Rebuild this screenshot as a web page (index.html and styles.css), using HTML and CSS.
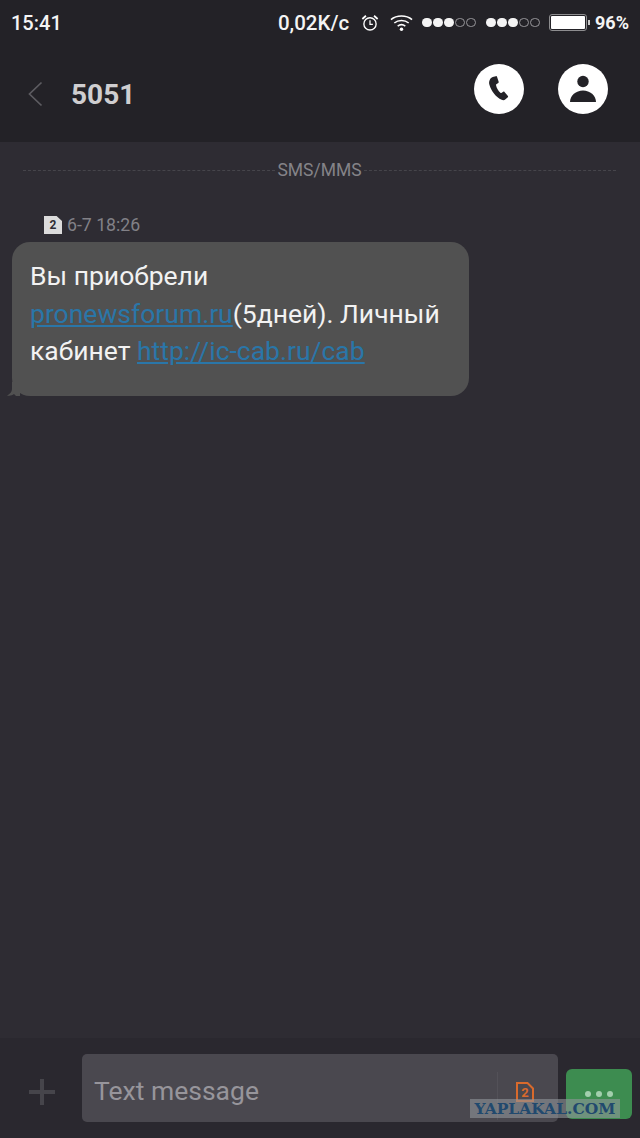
FILE: index.html
```html
<!DOCTYPE html>
<html lang="en">
<head>
  <meta charset="UTF-8" />
  <title>5051</title>
  <link rel="stylesheet" href="styles.css">
</head>
<body>

  <!-- Status bar + header -->
  <div class="top">
    <div class="status">
      <div class="time">15:41</div>
      <div class="status-right">
        <span class="speed">0,02K/c</span>
        <svg class="alarm" width="18" height="18" viewBox="0 0 20 20" fill="none" stroke="#fff">
          <circle cx="10" cy="11" r="6.8" stroke-width="1.5"/>
          <path d="M10 7v4.4h3.2" stroke-width="1.4"/>
          <path d="M1.500 5.500 5.500 2M18.500 5.500 14.500 2" stroke-width="2"/>
        </svg>
        <svg class="wifi" width="23" height="18" viewBox="0 0 24 18" fill="none" stroke="#fff" stroke-width="1.6">
          <path d="M1 5.500C7 .5 17 .5 23 5.500"/>
          <path d="M4.500 9C8.500 5.500 15.500 5.500 19.500 9"/>
          <path d="M8 12.300C10.500 10.300 13.500 10.300 16 12.300"/>
          <circle cx="12" cy="15.500" r="1.800" fill="#fff" stroke="none"/>
        </svg>
        <span class="dots sim1"><i></i><i></i><i></i><b></b><b></b></span>
        <span class="dots sim2"><i></i><i></i><i></i><b></b><b></b></span>
        <span class="battery"><span class="level"></span></span>
        <span class="percent">96%</span>
      </div>
    </div>

    <div class="header">
      <svg class="back" width="16" height="26" viewBox="0 0 16 26" fill="none" stroke="#5d5c61" stroke-width="1.700">
        <path d="M14.500 1.500 2.500 13l12 11.500"/>
      </svg>
      <div class="title">5051</div>
      <div class="round-btn btn-call">
        <svg width="22" height="25" viewBox="0 0 26 30">
          <path fill="#232227" d="M5.500 1.200 9.200.2c.7-.2 1.200.1 1.400.7l2 6c.2.6 0 1.100-.5 1.400L9.800 9.900c-.4.300-.5.600-.4 1 .6 3.400 2.700 7 5.300 9.300.3.300.7.300 1.100.1l2.300-1.400c.5-.3 1.100-.2 1.500.3l4.100 4.700c.4.500.4 1.100-.1 1.500l-2.800 2.600c-1.300 1.200-3 1.400-4.600.6C9.500 25.500 3.800 18.500 1.500 10.500 .9 8.300 1 6.500 2 4.500c.7-1.500 2-2.800 3.500-3.300z"/>
        </svg>
      </div>
      <div class="round-btn btn-contact">
        <svg width="28" height="28" viewBox="0 0 28 28" fill="#232227">
          <circle cx="14" cy="6.500" r="5.700"/>
          <path d="M1 27c0-6.500 6-11.500 13-11.500S27 20.500 27 27z"/>
        </svg>
      </div>
    </div>
  </div>

  <!-- Messages -->
  <div class="thread">
    <div class="divider">
      <span class="dash"></span>
      <span class="divider-text">SMS/MMS</span>
      <span class="dash"></span>
    </div>

    <div class="msg-meta">
      <span class="sim-badge">2</span>
      <span class="msg-date">6-7 18:26</span>
    </div>

    <div class="bubble">
      Вы приобрели<br>
      <a href="#">pronewsforum.ru</a>(5дней). Личный<br>
      кабинет <a href="#">http://ic-cab.ru/cab</a>
      <svg class="tail" width="13" height="14" viewBox="0 0 13 14">
        <path fill="#515151" d="M5 0v7c0 3-2 5-5 6.500 3 .5 5 0 7-1.500l2 2h4V0z"/>
      </svg>
    </div>
  </div>

  <!-- Compose bar -->
  <div class="compose">
    <svg class="plus" width="28" height="28" viewBox="0 0 28 28" fill="#46454b">
      <path d="M12 1h4v11h11v4H16v11h-4V16H1v-4h11z"/>
    </svg>
    <div class="input">
      <span class="placeholder">Text message</span>
      <span class="input-sep"></span>
      <span class="sim-out">
        <svg width="18" height="20" viewBox="0 0 18 20" fill="none" stroke="#d96a2c" stroke-width="2">
          <path d="M1 1h10.500L17 6.500V19H1z"/>
        </svg>
        <span class="sim-num">2</span>
      </span>
    </div>
    <div class="send">
      <i></i><i></i><i></i>
    </div>
    <div class="watermark">YAPLAKAL.COM</div>
  </div>

</body>
</html>
```

FILE: styles.css
```css
* {
  margin: 0;
  padding: 0;
  box-sizing: border-box;
}

body {
  font-family: Roboto, "Noto Sans", sans-serif;
  background-color: #2e2c33;
  display: flex;
  flex-direction: column;
  height: 100vh;
  overflow: hidden;
}

.top {
  background-color: #232227;
  height: 142px;
  flex-shrink: 0;
}

.status {
  display: flex;
  align-items: center;
  justify-content: space-between;
  height: 45px;
  padding: 0 11px 0 11px;
  color: #f4f4f4;
  font-weight: 500;
  font-size: 20px;
}

.status-right {
  display: flex;
  align-items: center;
}

.speed { margin-right: 12px; font-size: 20.500px; }
.alarm { margin-right: 11px; }
.wifi { margin-right: 9px; }

.dots {
  display: flex;
  align-items: center;
  gap: 1.500px;
}

.sim1 { margin-right: 10px; }
.sim2 { margin-right: 9px; }

.dots i, .dots b {
  width: 9.600px;
  height: 9.600px;
  border-radius: 50%;
}

.dots i { background-color: #f4f4f4; }
.dots b { border: 1px solid #97969a; }

.battery {
  width: 38px;
  height: 17px;
  border: 1px solid #8d8d8f;
  border-radius: 3px;
  padding: 1px;
  margin-right: 8px;
  position: relative;
}

.battery::after {
  content: "";
  position: absolute;
  right: -4px;
  top: 5px;
  width: 2px;
  height: 5px;
  background-color: #c9c9c9;
}

.level {
  display: block;
  height: 100%;
  background-color: #fff;
  border-radius: 1px;
}

.percent { font-size: 18px; font-weight: 700; }

.header {
  display: flex;
  align-items: center;
  height: 97px;
  padding: 0 32px 10px 27px;
}

.back { margin-right: 28px; margin-top: 10px; }

.title {
  font-size: 28px;
  font-weight: 700;
  color: #cfced0;
  flex: 1;
  margin-top: 11px;
}

.round-btn {
  width: 50px;
  height: 50px;
  border-radius: 50%;
  background-color: #fff;
  display: flex;
  align-items: center;
  justify-content: center;
}

.btn-call { margin-right: 34px; }

.thread {
  flex: 1;
  padding: 0 12px;
}

.divider {
  display: flex;
  align-items: center;
  gap: 2px;
  height: 56px;
  padding: 0 12px 0 11px;
}

.dash {
  flex: 1;
  border-top: 1px dashed #46454b;
}

.divider-text {
  color: #848388;
  font-size: 17.500px;
}

.msg-meta {
  display: flex;
  align-items: center;
  gap: 5px;
  height: 28px;
  padding: 0 0 0 32px;
  margin-top: 13px;
  margin-bottom: 3px;
}

.sim-badge {
  width: 18px;
  height: 18px;
  background-color: #dcdcdc;
  color: #2e2c33;
  font-size: 12px;
  font-weight: 700;
  clip-path: polygon(0 0, 70% 0, 100% 28%, 100% 100%, 0 100%);
  display: flex;
  align-items: center;
  justify-content: center;
}

.msg-date {
  color: #828187;
  font-size: 17.700px;
}

.bubble {
  position: relative;
  width: 457px;
  height: 154px;
  background-color: #515151;
  border-radius: 18px;
  padding: 15px 18px 0;
  font-size: 26.500px;
  line-height: 37.500px;
  color: #f2f2f2;
  white-space: nowrap;
}

.bubble a {
  color: #2a76a8;
  text-decoration: underline;
  text-underline-offset: 2px;
}

.tail {
  position: absolute;
  left: -5px;
  bottom: 0;
}

.compose {
  position: relative;
  flex-shrink: 0;
  height: 100px;
  background-color: #2a282f;
  display: flex;
  align-items: flex-start;
  padding: 16px 8px 0 28px;
}

.plus { margin-top: 24px; margin-right: 26px; }

.input {
  position: relative;
  width: 476px;
  height: 68px;
  background-color: #4a484f;
  border-radius: 5px;
  display: flex;
  align-items: center;
  padding: 4px 0 0 12px;
  margin-right: 8px;
}

.placeholder {
  flex: 1;
  color: #97959b;
  font-size: 26.500px;
}

.input-sep {
  width: 1px;
  height: 48px;
  margin-top: 12px;
  background-color: #535158;
}

.sim-out {
  position: relative;
  width: 18px;
  height: 20px;
  margin: 4px 24px 0 18px;
}

.sim-out svg { display: block; }

.sim-num {
  position: absolute;
  left: 0;
  right: 0;
  top: 3px;
  color: #d96a2c;
  font-size: 13px;
  font-weight: 700;
  line-height: 16px;
  text-align: center;
}

.send {
  width: 66px;
  height: 50px;
  margin-top: 15px;
  background-color: #3d8c50;
  border-radius: 6px;
  display: flex;
  align-items: center;
  justify-content: center;
  gap: 5px;
}

.send i {
  width: 6px;
  height: 6px;
  border-radius: 50%;
  background-color: #a3cfae;
}

/* image host stamp, sits over the bar */
.watermark {
  position: absolute;
  left: 470px;
  top: 61px;
  width: 150px;
  height: 19px;
  background-color: rgba(145, 150, 155, 0.6);
  color: #21496e;
  font-family: "DejaVu Serif", serif;
  font-size: 15.500px;
  font-weight: 700;
  line-height: 19px;
  text-align: center;
  white-space: nowrap;
}
```
